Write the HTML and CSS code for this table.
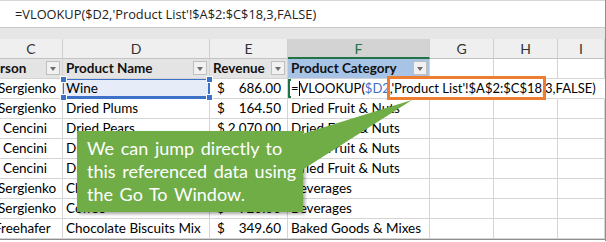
FILE: index.html
```html
<!DOCTYPE html>
<html>
<head>
<meta charset="utf-8">
<link rel="stylesheet" href="styles.css">
</head>
<body>
<div class="frame">
  <div class="fbar">=VLOOKUP($D2,'Product List'!$A$2:$C$18,3,FALSE)</div>
  <div class="band"></div>
  <div class="sheet">
    <div class="ch">C</div>
    <div class="ch">D</div>
    <div class="ch">E</div>
    <div class="ch sel">F</div>
    <div class="ch">G</div>
    <div class="ch">H</div>
    <div class="ch">I</div>

    <div class="c th"><span class="cut-r">rson</span><span class="fb"></span></div>
    <div class="c th">Product Name<span class="fb"></span></div>
    <div class="c th">Revenue<span class="fb"></span></div>
    <div class="c th blue">Product Category<span class="fb"></span></div>
    <div class="c"></div>
    <div class="c"></div>
    <div class="c"></div>

    <div class="c"><span class="cut-s">Sergienko</span></div>
    <div class="c refsel">Wine<i class="h tl"></i><i class="h tr"></i><i class="h bl"></i><i class="h br"></i></div>
    <div class="c money"><span>$</span><span>686.00</span></div>
    <div class="c active"><span class="ftext">=<b class="caret"></b>VLOOKUP(<span class="ref1">$D2</span>,<span class="rng">'Product List'!$A$2:$C$18,</span>3,FALSE)</span></div>
    <div class="c ovf"></div>
    <div class="c ovf"></div>
    <div class="c ovf"></div>

    <div class="c"><span class="cut-s">Sergienko</span></div>
    <div class="c">Dried Plums</div>
    <div class="c money"><span>$</span><span>164.50</span></div>
    <div class="c">Dried Fruit &amp; Nuts</div>
    <div class="c"></div><div class="c"></div><div class="c"></div>

    <div class="c"><span class="cut-c">Cencini</span></div>
    <div class="c">Dried Pears</div>
    <div class="c money"><span>$</span><span>2,070.00</span></div>
    <div class="c">Dried Fruit &amp; Nuts</div>
    <div class="c"></div><div class="c"></div><div class="c"></div>

    <div class="c"><span class="cut-c">Cencini</span></div>
    <div class="c">Dried Apples</div>
    <div class="c money"><span>$</span><span>530.00</span></div>
    <div class="c">Dried Fruit &amp; Nuts</div>
    <div class="c"></div><div class="c"></div><div class="c"></div>

    <div class="c"><span class="cut-c">Cencini</span></div>
    <div class="c">Dried Apples</div>
    <div class="c money"><span>$</span><span>265.00</span></div>
    <div class="c">Dried Fruit &amp; Nuts</div>
    <div class="c"></div><div class="c"></div><div class="c"></div>

    <div class="c"><span class="cut-s">Sergienko</span></div>
    <div class="c">Chai</div>
    <div class="c money"><span>$</span><span>270.00</span></div>
    <div class="c">Beverages</div>
    <div class="c"></div><div class="c"></div><div class="c"></div>

    <div class="c"><span class="cut-s">Sergienko</span></div>
    <div class="c">Coffee</div>
    <div class="c money"><span>$</span><span>920.00</span></div>
    <div class="c">Beverages</div>
    <div class="c"></div><div class="c"></div><div class="c"></div>

    <div class="c"><span class="cut-f">Freehafer</span></div>
    <div class="c">Chocolate Biscuits Mix</div>
    <div class="c money"><span>$</span><span>349.60</span></div>
    <div class="c">Baked Goods &amp; Mixes</div>
    <div class="c"></div><div class="c"></div><div class="c"></div>
  </div>

  <div class="callout">
    <svg class="wedge" width="130" height="80" viewBox="0 0 130 80">
      <polygon points="0,34 110,0 0,70" fill="#70ad47"/>
    </svg>
    <p class="ctext">We can jump directly to<br>this referenced data using<br>the Go To Window.</p>
  </div>
</div>
</body>
</html>
```

FILE: styles.css
```css
html, body {
  margin: 0;
  padding: 0;
  background: #ffffff;
}

.frame {
  position: relative;
  width: 605px;
  height: 241px;
  border-right: 1px solid #8f8f8f;
  overflow: hidden;
  font-family: Lato, "Liberation Sans", sans-serif;
  color: #000;
}

.fbar {
  height: 28px;
  box-sizing: border-box;
  border-top: 1px solid #d6d6d6;
  border-bottom: 1px solid #c8c8c8;
  background: #fff;
  padding-left: 15px;
  line-height: 26px;
  font-family: "Open Sans", "Noto Sans", sans-serif;
  font-size: 12.8px;
  color: #222;
  white-space: nowrap;
}

.band {
  height: 11px;
  background: #e6e6e6;
}

.sheet {
  display: grid;
  grid-template-columns: 63px 147px 78px 142px 64px 64px 47px;
  grid-auto-rows: 20px;
  border-bottom: 1px solid #8f8f8f;
}

.ch {
  box-sizing: border-box;
  background: #efefef;
  border-right: 1px solid #cfcfcf;
  border-bottom: 1px solid #c2c2c2;
  text-align: center;
  font-size: 14px;
  line-height: 19px;
  color: #333;
}

.ch.sel {
  background: #d3d3d3;
  color: #217346;
  border-bottom: 2px solid #217346;
}

.c {
  position: relative;
  box-sizing: border-box;
  border-right: 1px solid #d4d4d4;
  border-bottom: 1px solid #d4d4d4;
  padding: 0 3px;
  font-size: 13.5px;
  line-height: 19px;
  white-space: nowrap;
  overflow: hidden;
}

.th {
  background: #e4e4e4;
  font-weight: bold;
  color: #111;
}

.th.blue {
  background: #a7c4e7;
}

.fb {
  position: absolute;
  right: 2px;
  top: 2px;
  width: 14px;
  height: 14px;
  box-sizing: border-box;
  border: 1px solid #bfbfbf;
  background: #f1f1f1;
}

.fb::after {
  content: "";
  position: absolute;
  left: 3px;
  top: 5px;
  border-left: 3.5px solid transparent;
  border-right: 3.5px solid transparent;
  border-top: 4px solid #6d6d6d;
}

.cut-r { margin-left: -3px; }
.cut-s { margin-left: -5px; }
.cut-c { margin-left: 0px; }
.cut-f { margin-left: -9px; }

.refsel {
  overflow: visible;
  background: #e6edf8;
  box-shadow: inset 0 0 0 1px #3e72c8;
  border-right-color: #3e72c8;
  border-bottom: 2px solid #3e72c8;
  z-index: 2;
}

.h {
  position: absolute;
  width: 5px;
  height: 5px;
  background: #3e72c8;
  border: 1px solid #fff;
  box-sizing: content-box;
}
.h.tl { left: -3px; top: -3px; }
.h.tr { right: -4px; top: -3px; }
.h.bl { left: -3px; bottom: -4px; }
.h.br { right: -4px; bottom: -4px; }

.money {
  display: flex;
  justify-content: space-between;
  padding: 0 6px 0 7px;
}

.active {
  overflow: visible;
  box-shadow: inset 0 0 0 2px #217346;
  z-index: 1;
}

.ftext {
  position: relative;
  z-index: 3;
  display: inline-block;
  background: #fff;
  padding-right: 4px;
  font-size: 13px;
}

.caret {
  display: inline-block;
  width: 1px;
  height: 15px;
  background: #000;
  vertical-align: -3px;
}

.ref1 { color: #3e72c8; }

.rng {
  position: relative;
}

.rng::after {
  content: "";
  position: absolute;
  left: -4px;
  right: -1px;
  top: -4px;
  bottom: -4px;
  border: 3px solid #ed7d31;
}

.ovf { border-right-color: transparent; }

.callout {
  position: absolute;
  left: 77px;
  top: 131px;
  width: 226px;
  height: 81px;
  box-sizing: border-box;
  background: #70ad47;
  box-shadow: 2px 2px 3px rgba(0, 0, 0, 0.35);
  padding: 6px 6px 6px 10px;
  z-index: 6;
}

.wedge {
  position: absolute;
  left: 225px;
  top: -31px;
  overflow: visible;
}

.ctext {
  margin: 0;
  color: #fff;
  font-family: Lato, "Liberation Sans", sans-serif;
  font-size: 18px;
  line-height: 23px;
  word-spacing: 2px;
  white-space: nowrap;
}
```
